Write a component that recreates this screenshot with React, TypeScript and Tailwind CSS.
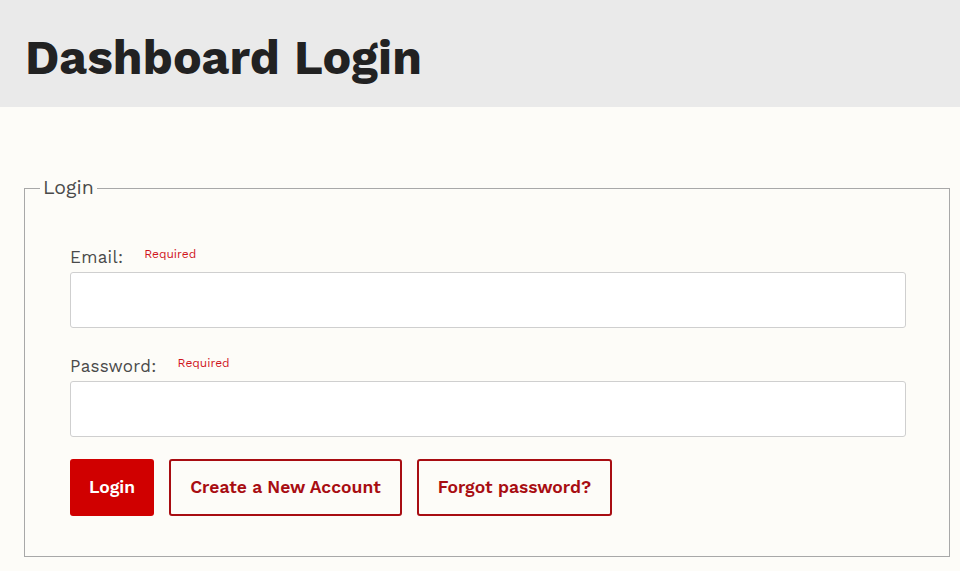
import React from 'react';

const font = { fontFamily: '"Work Sans", Inter, "Liberation Sans", sans-serif' };

function Field({ label, type }: { label: string; type: string }) {
  return (
    <div className="mb-[25px]">
      <div className="flex items-start gap-[21px] h-[28px]">
        <label className="text-[17px] leading-[26px] tracking-[0.3px] text-[#4a4a4a]">{label}</label>
        <span className="text-[12px] leading-[20px] text-[#d0141c]">Required</span>
      </div>
      <input
        type={type}
        className="block w-full h-[56px] bg-white border border-[#cfcfcf] rounded-[3px] px-3 outline-none"
      />
    </div>
  );
}

const btn = 'h-[57px] px-[19px] rounded-[3px] font-semibold text-[17.5px]';

export default function App() {
  return (
    <div className="min-h-[571px] bg-[#fdfcf8]" style={font}>
      <header className="h-[107px] bg-[#eaeaea] flex items-center px-[25px]">
        <h1 className="text-[48px] leading-none font-bold text-[#222] tracking-[0.1px] pt-[8px]">Dashboard Login</h1>
      </header>
      <main className="pt-[69px] pl-[24px] pr-[10px]">
        <fieldset className="border border-[#a8a8a8] px-[15px] pb-[40px]">
          <legend className="px-[3px] text-[19.5px] leading-[24px] text-[#4a4a4a]">Login</legend>
          <div className="pl-[30px] pr-[28px] pt-[44px]">
            <Field label="Email:" type="email" />
            <Field label="Password:" type="password" />
            <div className="flex gap-[15px] -mt-[3px]">
              <button className={`${btn} bg-[#d00000] text-white`}>Login</button>
              <button className={`${btn} border-2 border-[#a80d12] text-[#a80d12]`}>Create a New Account</button>
              <button className={`${btn} border-2 border-[#a80d12] text-[#a80d12]`}>Forgot password?</button>
            </div>
          </div>
        </fieldset>
      </main>
    </div>
  );
}
